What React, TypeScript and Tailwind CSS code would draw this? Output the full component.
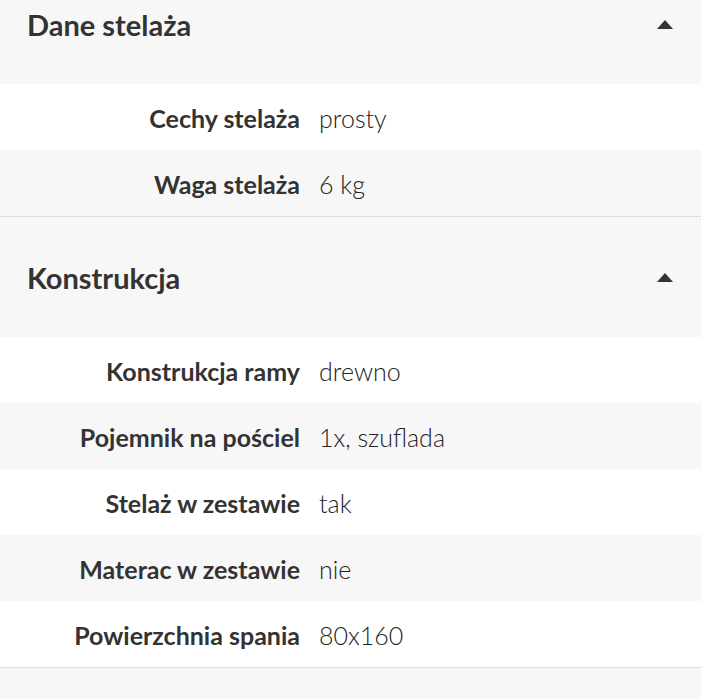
import React from 'react';

type Row = { label: string; value: string };

const sections: { title: string; rows: Row[] }[] = [
  {
    title: 'Dane stelaża',
    rows: [
      { label: 'Cechy stelaża', value: 'prosty' },
      { label: 'Waga stelaża', value: '6 kg' },
    ],
  },
  {
    title: 'Konstrukcja',
    rows: [
      { label: 'Konstrukcja ramy', value: 'drewno' },
      { label: 'Pojemnik na pościel', value: '1x, szuflada' },
      { label: 'Stelaż w zestawie', value: 'tak' },
      { label: 'Materac w zestawie', value: 'nie' },
      { label: 'Powierzchnia spania', value: '80x160' },
    ],
  },
];

function Caret() {
  return (
    <svg width="16" height="9" viewBox="0 0 16 9" className="shrink-0">
      <path d="M8 0 L16 9 L0 9 Z" fill="#333" />
    </svg>
  );
}

export default function App() {
  return (
    <div
      className="w-[701px] h-[699px] overflow-hidden bg-[#f7f7f7] text-[#333]"
      style={{ fontFamily: 'Lato, "Noto Sans", sans-serif' }}
    >
      <div className="-mt-[36px]">
        {sections.map(section => (
          <div key={section.title} className="border-b border-dotted border-[#c8c8c8]">
            {/* HEADER */}
            <div className="h-[120px] flex items-center justify-between pl-[27px] pr-[28px] bg-[#f7f7f7]">
              <h2 className="text-[29px] font-bold leading-none">{section.title}</h2>
              <Caret />
            </div>

            {/* ROWS */}
            {section.rows.map((row, i) => (
              <div
                key={row.label}
                className={`h-[66px] flex items-center pt-[3px] text-[25px] ${i % 2 === 0 ? 'bg-white' : 'bg-[#f7f7f7]'}`}
              >
                <div className="w-[300px] text-right font-bold">{row.label}</div>
                <div className="pl-[19px] font-light text-[#222]">{row.value}</div>
              </div>
            ))}
          </div>
        ))}
      </div>
    </div>
  );
}
